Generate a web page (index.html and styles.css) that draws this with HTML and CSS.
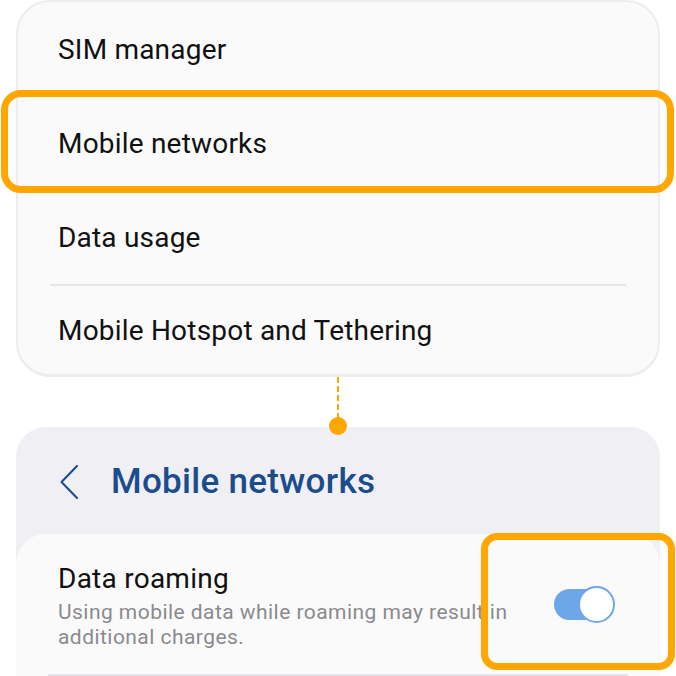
FILE: index.html
```html
<!DOCTYPE html>
<html lang="en">
<head>
  <meta charset="UTF-8" />
  <meta name="viewport" content="width=device-width, initial-scale=1.0"/>
  <title>Mobile networks</title>
  <link rel="stylesheet" href="styles.css">
</head>
<body>
  <main class="page">
    <section class="menu-card">
      <div class="menu-row">SIM manager</div>
      <div class="menu-row highlighted">Mobile networks</div>
      <div class="menu-row">Data usage</div>
      <div class="divider"></div>
      <div class="menu-row last">Mobile Hotspot and Tethering</div>
    </section>

    <div class="connector">
      <span class="connector-line"></span>
      <span class="connector-dot"></span>
    </div>

    <section class="screen-card">
      <header class="screen-header">
        <svg class="back-icon" width="18" height="34" viewBox="0 0 18 34">
          <polyline points="17,1 1.5,17 17,33" fill="none" stroke="#1b4c8c" stroke-width="2" stroke-linecap="round" stroke-linejoin="round"/>
        </svg>
        <h1>Mobile networks</h1>
      </header>
      <div class="setting-card">
        <div class="setting-row highlighted">
          <div class="setting-text">
            <h2>Data roaming</h2>
            <p>Using mobile data while roaming may result in additional charges.</p>
          </div>
          <div class="toggle">
            <span class="toggle-track"></span>
            <span class="toggle-thumb"></span>
          </div>
        </div>
        <div class="divider"></div>
      </div>
    </section>
  </main>
</body>
</html>
```

FILE: styles.css
```css
:root {
  --orange: #ffa700;
  --card: #fafafb;
  --card-edge: #ececf1;
  --panel: #efeff4;
  --text: #111;
  --muted: #8a8a8e;
  --blue: #1b4c8c;
  --switch: #6ea6ea;
}

*,
*::before,
*::after {
  margin: 0;
  padding: 0;
  box-sizing: border-box;
}

html, body {
  overflow: hidden;
}

body {
  font-family: Roboto, 'Noto Sans', sans-serif;
  background: #fff;
  color: var(--text);
  width: 676px;
  height: 676px;
}

.page {
  padding: 0 16px;
  display: flex;
  flex-direction: column;
}

.menu-card {
  background: var(--card);
  border: 2px solid var(--card-edge);
  border-bottom-width: 3px;
  border-radius: 34px;
}

.menu-row {
  height: 94px;
  display: flex;
  align-items: center;
  padding-left: 40px;
  font-size: 28px;
  letter-spacing: 0.2px;
  position: relative;
}

.menu-row.last {
  height: 88px;
}

.menu-row.highlighted::after {
  content: '';
  position: absolute;
  top: -6px;
  bottom: -3px;
  left: -17px;
  right: -16px;
  border: 7px solid var(--orange);
  border-radius: 20px;
}

.divider {
  height: 2px;
  background: #e6e6ea;
  margin: 0 32px;
}

.connector {
  height: 58px;
  display: flex;
  flex-direction: column;
  align-items: center;
  margin-bottom: -8px;
  position: relative;
  z-index: 1;
}

.connector-line {
  flex: 1;
  width: 0;
  border-left: 2px dashed var(--orange);
}

.connector-dot {
  width: 18px;
  height: 18px;
  border-radius: 50%;
  background: var(--orange);
  margin-top: -2px;
}

.screen-card {
  background: var(--panel);
  border-radius: 30px 30px 0 0;
}

.screen-header {
  height: 107px;
  display: flex;
  align-items: center;
  gap: 33px;
  padding: 2px 0 0 44px;
}

.screen-header h1 {
  font-size: 35px;
  font-weight: 500;
  letter-spacing: 0.3px;
  color: var(--blue);
}

.setting-card {
  background: var(--card);
  border-radius: 30px 30px 0 0;
}

.setting-row {
  height: 140px;
  display: flex;
  align-items: center;
  padding: 0 0 0 42px;
  position: relative;
}

.setting-row.highlighted::after {
  content: '';
  position: absolute;
  top: -1px;
  left: 465px;
  width: 194px;
  height: 137px;
  border: 7px solid var(--orange);
  border-radius: 16px;
}

.setting-text {
  width: 464px;
  padding-top: 3px;
}

.setting-text h2 {
  font-size: 28px;
  font-weight: 400;
  letter-spacing: 0.25px;
  line-height: 34px;
  margin-bottom: 4px;
}

.setting-text p {
  font-size: 21px;
  letter-spacing: 0.45px;
  line-height: 25px;
  color: var(--muted);
}

.toggle {
  position: relative;
  width: 61px;
  height: 37px;
  margin: 0 0 0 32px;
}

.toggle-track {
  position: absolute;
  left: 0;
  top: 3px;
  width: 50px;
  height: 31px;
  border-radius: 16px;
  background: var(--switch);
}

.toggle-thumb {
  position: absolute;
  right: 0;
  top: 0;
  width: 37px;
  height: 37px;
  border-radius: 50%;
  background: #fff;
  border: 2px solid var(--switch);
}
```
